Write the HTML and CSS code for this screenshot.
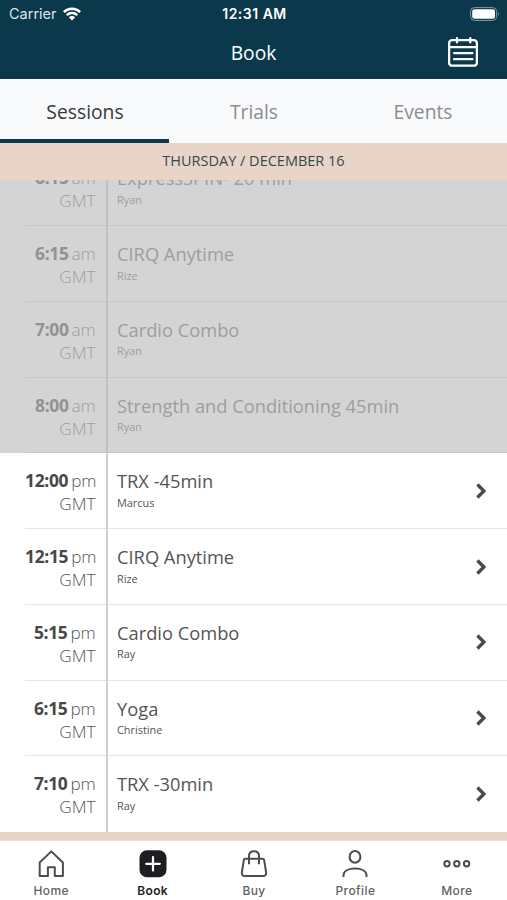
FILE: index.html
```
<!DOCTYPE html>
<html lang="en">
<head>
  <meta charset="UTF-8" />
  <meta name="viewport" content="width=device-width, initial-scale=1.0"/>
  <title>Book</title>
  <link rel="stylesheet" href="styles.css">
</head>
<body>
  <div class="app">
    <header class="header">
      <div class="status-bar">
        <div class="carrier">
          <span>Carrier</span>
          <svg class="wifi" viewBox="0 0 18 14">
            <path d="M0 4.3 A12.8 12.8 0 0 1 18 4.3 L16.3 6 A10.3 10.3 0 0 0 1.7 6 Z"/>
            <path d="M2.9 7.3 A8.7 8.7 0 0 1 15.1 7.3 L13.4 9 A6.2 6.2 0 0 0 4.6 9 Z"/>
            <path d="M5.8 10.2 A4.6 4.6 0 0 1 12.2 10.2 L9 13.4 Z"/>
          </svg>
        </div>
        <div class="clock">12:31 AM</div>
        <svg class="battery" viewBox="0 0 30 14">
          <rect x=".6" y=".6" width="26" height="12.8" rx="3.8" fill="none" stroke="#839aa5"/>
          <rect x="2.2" y="2.2" width="22.8" height="9.6" rx="2.4" fill="#fff"/>
          <path d="M28 4.7 Q29.8 7 28 9.3 Z" fill="#839aa5"/>
        </svg>
      </div>
      <div class="title-bar">
        <h1>Book</h1>
        <svg class="calendar" viewBox="0 0 30 30">
          <rect x="1.1" y="3.1" width="27.8" height="25.6" rx="3"/>
          <path d="M1 10.1H29M9 1.2V5.4M22.3 1.2V5.4M6 16.1H24.4M6 22.2H24.4"/>
        </svg>
      </div>
    </header>

    <nav class="tabs">
      <div class="tab active">Sessions</div>
      <div class="tab">Trials</div>
      <div class="tab">Events</div>
    </nav>

    <div class="date">THURSDAY / DECEMBER 16</div>

    <main class="sessions">
      <div class="session past">
        <div class="time"><b>6:15</b><span>am</span><div>GMT</div></div>
        <div class="info"><h2>ExpressSPIN- 20 min</h2><p>Ryan</p></div>
      </div>
      <div class="session past">
        <div class="time"><b>6:15</b><span>am</span><div>GMT</div></div>
        <div class="info"><h2>CIRQ Anytime</h2><p>Rize</p></div>
      </div>
      <div class="session past">
        <div class="time"><b>7:00</b><span>am</span><div>GMT</div></div>
        <div class="info"><h2>Cardio Combo</h2><p>Ryan</p></div>
      </div>
      <div class="session past">
        <div class="time"><b>8:00</b><span>am</span><div>GMT</div></div>
        <div class="info"><h2>Strength and Conditioning 45min</h2><p>Ryan</p></div>
      </div>
      <div class="session">
        <div class="time"><b>12:00</b><span>pm</span><div>GMT</div></div>
        <div class="info"><h2>TRX -45min</h2><p>Marcus</p></div>
        <svg class="arrow" viewBox="0 0 10 16"><path d="M1.4 1.5 7.9 8 1.4 14.5"/></svg>
      </div>
      <div class="session">
        <div class="time"><b>12:15</b><span>pm</span><div>GMT</div></div>
        <div class="info"><h2>CIRQ Anytime</h2><p>Rize</p></div>
        <svg class="arrow" viewBox="0 0 10 16"><path d="M1.4 1.5 7.9 8 1.4 14.5"/></svg>
      </div>
      <div class="session">
        <div class="time"><b>5:15</b><span>pm</span><div>GMT</div></div>
        <div class="info"><h2>Cardio Combo</h2><p>Ray</p></div>
        <svg class="arrow" viewBox="0 0 10 16"><path d="M1.4 1.5 7.9 8 1.4 14.5"/></svg>
      </div>
      <div class="session">
        <div class="time"><b>6:15</b><span>pm</span><div>GMT</div></div>
        <div class="info"><h2>Yoga</h2><p>Christine</p></div>
        <svg class="arrow" viewBox="0 0 10 16"><path d="M1.4 1.5 7.9 8 1.4 14.5"/></svg>
      </div>
      <div class="session">
        <div class="time"><b>7:10</b><span>pm</span><div>GMT</div></div>
        <div class="info"><h2>TRX -30min</h2><p>Ray</p></div>
        <svg class="arrow" viewBox="0 0 10 16"><path d="M1.4 1.5 7.9 8 1.4 14.5"/></svg>
      </div>
    </main>

    <div class="next-date"></div>

    <footer class="bottom-nav">
      <div class="nav-item">
        <svg viewBox="0 0 28 28"><path d="M2.7 26.1V12.5L14.3 1.4 25.9 12.5V26.1H17.8V17.3H10.9V26.1Z"/></svg>
        <span>Home</span>
      </div>
      <div class="nav-item active">
        <svg viewBox="0 0 28 28"><rect class="fill" x=".5" y=".2" width="27" height="27" rx="7.5"/><path class="plus" d="M14 7V20.6M7.2 13.8H20.8"/></svg>
        <span>Book</span>
      </div>
      <div class="nav-item">
        <svg viewBox="0 0 28 28"><path d="M5.4 8.8H22.6Q24 8.8 24.2 10.2L26.1 22.3Q26.4 26 23.2 26H4.8Q1.6 26 1.9 22.3L3.8 10.2Q4 8.8 5.4 8.8ZM9 14.2V6Q9 1.2 14 1.2T19 6V14.2"/></svg>
        <span>Buy</span>
      </div>
      <div class="nav-item">
        <svg viewBox="0 0 28 28"><ellipse cx="14" cy="6.9" rx="5.4" ry="5.8"/><path d="M2.5 27V25.4C2.5 21 7.5 18.6 14 18.6S25.5 21 25.5 25.4V27"/></svg>
        <span>Profile</span>
      </div>
      <div class="nav-item">
        <svg viewBox="0 0 28 28"><circle cx="4" cy="13.8" r="2.7"/><circle cx="13.8" cy="13.8" r="2.7"/><circle cx="23.6" cy="13.8" r="2.7"/></svg>
        <span>More</span>
      </div>
    </footer>
  </div>
</body>
</html>
```
FILE: styles.css
```
* {
  box-sizing: border-box;
}

body {
  font-family: "Open Sans", sans-serif;
  background: #fff;
  margin: 0;
}

h1, h2, p {
  margin: 0;
  font-weight: normal;
}

.app {
  display: flex;
  flex-direction: column;
  height: 900px;
  overflow: hidden;
}

.header {
  height: 79px;
  flex: none;
  background: #0c384b;
  color: #fff;
}

.status-bar {
  display: grid;
  grid-template-columns: 1fr auto 1fr;
  align-items: center;
  height: 27px;
  padding: 0 7px 0 9px;
  font: 14.5px Inter, sans-serif;
}

.carrier {
  display: flex;
  align-items: center;
  gap: 6px;
  color: #dce5e9;
}

.wifi {
  width: 18px;
  height: 14px;
  fill: #fff;
}

.clock {
  font-weight: 600;
  font-size: 14px;
  letter-spacing: 0.5px;
}

.battery {
  width: 30px;
  height: 14px;
  justify-self: end;
}

.title-bar {
  display: grid;
  grid-template-columns: 1fr auto 1fr;
  align-items: center;
  height: 50px;
  padding: 0 29px;
}

.title-bar h1 {
  grid-column: 2;
  font-size: 19.2px;
}

.calendar {
  width: 30px;
  height: 30px;
  justify-self: end;
  fill: none;
  stroke: #fff;
  stroke-width: 2.3;
  stroke-linecap: round;
}

.tabs {
  display: flex;
  flex: none;
  height: 64px;
  background: #f9fafc;
}

.tab {
  flex: 1;
  padding-top: 2px;
  padding-left: 1px;
  line-height: 61px;
  text-align: center;
  font-size: 19.3px;
  color: #8c8c90;
}

.tab.active {
  color: #38383a;
  border-bottom: 4px solid #0c384b;
}

.date {
  flex: none;
  height: 37px;
  line-height: 36px;
  background: #e8d5c7;
  color: #324850;
  text-align: center;
  font-size: 14.5px;
}

/* scrolled to the bottom, the first row is cut off by the date */
.sessions {
  display: flex;
  flex-direction: column;
  justify-content: flex-end;
  height: 652px;
  flex: none;
  overflow: hidden;
}

.session {
  display: flex;
  flex: none;
  height: 75.75px;
  padding-left: 25px;
  color: #555;
  background: linear-gradient(#e6e6e6, #e6e6e6) 25px 100% / 100% 1px no-repeat;
}

.session:last-child {
  background: none;
}

.session.past {
  color: #9e9e9e;
  background-color: #d4d4d4;
  background-image: linear-gradient(#c8c8c8, #c8c8c8);
}

.time {
  width: 82.5px;
  padding: 16px 10px 0 0;
  border-right: 2px solid #d0d0d0;
  text-align: right;
  font-size: 17.2px;
  line-height: 23px;
  font-weight: 300;
  white-space: nowrap;
}

.past .time {
  border-color: #c0c0c0;
}

.time b {
  font-weight: 700;
  font-size: 17.4px;
  letter-spacing: -0.3px;
  color: #484848;
}

.past .time b {
  color: #929292;
}

.time span {
  margin-left: 3px;
  letter-spacing: -0.2px;
}

.info {
  flex: 1;
  padding: 15px 0 0 9.5px;
}

.info h2 {
  font-size: 18.3px;
  line-height: 25px;
}

.info p {
  font-size: 10.9px;
  line-height: 16px;
  margin-top: 1.5px;
}

.arrow {
  width: 10px;
  height: 16px;
  margin: 29.5px 21px 0 0;
  fill: none;
  stroke: #4a4a4a;
  stroke-width: 3.4;
}

.next-date {
  flex: none;
  height: 8px;
  background: #e8d5c7;
}

.bottom-nav {
  display: flex;
  flex: 1;
  border-top: 1px solid #dedede;
}

.nav-item {
  flex: 1;
  display: flex;
  flex-direction: column;
  align-items: center;
  padding: 9px 0 0 1px;
  font: 500 12px Inter, sans-serif;
  letter-spacing: 0.4px;
  color: #606264;
}

.nav-item svg {
  width: 28px;
  height: 28px;
  margin-bottom: 5px;
  fill: none;
  stroke: #4b4d50;
  stroke-width: 2;
  stroke-linejoin: round;
}

.nav-item.active {
  color: #222;
  font-weight: 600;
}

.nav-item .fill {
  fill: #1c1e21;
  stroke: none;
}

.nav-item .plus {
  stroke: #fff;
  stroke-width: 2.2;
  stroke-linecap: round;
}
```
